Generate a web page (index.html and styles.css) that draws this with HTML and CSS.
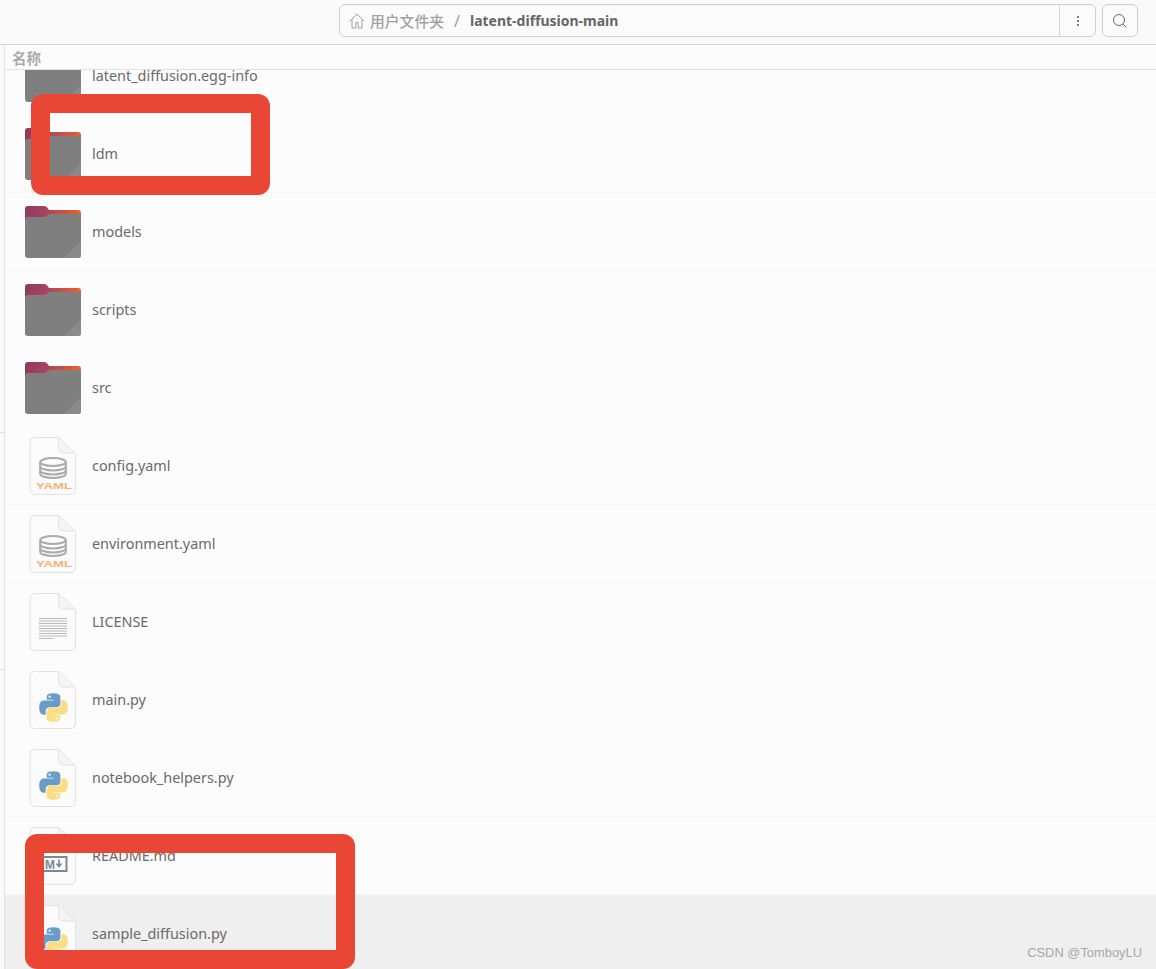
FILE: index.html
```html
<!DOCTYPE html>
<html lang="zh-CN">
<head>
    <meta charset="UTF-8">
    <meta name="viewport" content="width=device-width, initial-scale=1.0">
    <title>latent-diffusion-main</title>
    <link rel="stylesheet" href="styles.css">
</head>
<body>
    <svg class="defs" width="0" height="0">
        <defs>
            <linearGradient id="folderBack" x1="0" y1="0" x2="1" y2="0.2">
                <stop offset="0" stop-color="#8e3766"/>
                <stop offset="0.45" stop-color="#a9485a"/>
                <stop offset="1" stop-color="#e8622c"/>
            </linearGradient>
            <symbol id="folder" viewBox="0 0 64 64">
                <path d="M4 9a3 3 0 0 1 3-3h16c2 0 3 1 4 2.500l1 1.500h29a3 3 0 0 1 3 3v20H4z" fill="url(#folderBack)"/>
                <path d="M4 20a3 3 0 0 1 3-3h15c2 0 3-.5 4-1.500l.5-.5c.8-.700 1.500-1 3-1H57a3 3 0 0 1 3 3v38a3 3 0 0 1-3 3H7a3 3 0 0 1-3-3z" fill="#7f7f7f"/>
                <path d="M60 41v14a3 3 0 0 1-3 3H43z" fill="#8a8a8a"/>
            </symbol>
            <symbol id="page" viewBox="0 0 64 64">
                <path d="M13.500 3.500h23.500c1 0 1.500.4 2.300 1.200l14.500 14c.5.600.7 1 .7 2V56a4.500 4.500 0 0 1-4.500 4.500H13.500A4.500 4.500 0 0 1 9 56V8a4.500 4.500 0 0 1 4.500-4.500z" fill="#fbfbfb" stroke="#e2e2e2"/>
                <path d="M37.500 4v10a5 5 0 0 0 5 5h11.500" fill="#f4f4f4" stroke="#e2e2e2"/>
            </symbol>
            <symbol id="python" viewBox="0 0 24 24">
                <path d="M12 .2C6 .2 6.400 2.800 6.400 2.800v2.700h5.700v.8H4.100S.2 5.900.2 12s3.300 5.900 3.300 5.900h2v-2.800s-.1-3.400 3.300-3.400h5.700s3.200.1 3.200-3.100V3.400S18.200.2 12 .2z" fill="#6a9cc7"/>
                <circle cx="8.800" cy="3" r="1" fill="#e8eef4"/>
                <path d="M12 23.800c6 0 5.600-2.600 5.600-2.600v-2.700h-5.700v-.8h8s3.900.4 3.900-5.700-3.300-5.900-3.300-5.900h-2v2.800s.1 3.400-3.300 3.400H9.500s-3.200-.1-3.200 3.100v5.200s-.5 3.200 5.700 3.200z" fill="#fbdd83"/>
                <circle cx="15.200" cy="21" r="1" fill="#fdf6dc"/>
            </symbol>
            <symbol id="database" viewBox="0 0 28 22">
                <g fill="none" stroke="#ababab" stroke-width="2">
                    <ellipse cx="14" cy="5" rx="12.800" ry="4"/>
                    <path d="M1.200 5v12c0 2.200 5.700 4 12.800 4s12.800-1.800 12.800-4V5"/>
                    <path d="M1.200 9.500c0 2.200 5.700 4 12.800 4s12.800-1.800 12.800-4"/>
                    <path d="M1.200 13.500c0 2.200 5.700 4 12.800 4s12.800-1.800 12.800-4"/>
                </g>
            </symbol>
        </defs>
    </svg>

    <header class="toolbar">
        <div class="pathbar">
            <div class="crumbs">
                <svg class="home-icon" width="16" height="16" viewBox="0 0 16 16">
                    <path d="M.8 8.300 8 1l7.200 7.300M3 6.300v8.700h3.800V9.500h2.400V15H13V6.300" fill="none" stroke="#a0a0a0"/>
                </svg>
                <span class="crumb">用户文件夹</span>
                <span class="crumb-sep">/</span>
                <span class="crumb-current">latent-diffusion-main</span>
            </div>
            <button class="menu-btn">
                <svg width="4" height="12" viewBox="0 0 4 12"><g fill="#555"><circle cx="2" cy="2" r="1"/><circle cx="2" cy="6" r="1"/><circle cx="2" cy="10" r="1"/></g></svg>
            </button>
        </div>
        <button class="search-btn">
            <svg width="16" height="16" viewBox="0 0 16 16">
                <circle cx="7" cy="7" r="5.500" fill="none" stroke="#666"/>
                <path d="m11 11 3.500 3.500" stroke="#666"/>
            </svg>
        </button>
    </header>

    <div class="main">
        <aside class="sidebar">
            <div class="side-section side-places"></div>
            <div class="side-section side-devices"></div>
        </aside>
        <section class="content">
            <div class="col-header">名称</div>
            <div class="list">
                <div class="rows">
                    <div class="row">
                        <svg class="icon"><use href="#folder"/></svg>
                        <span class="name">latent_diffusion.egg-info</span>
                    </div>
                    <div class="row">
                        <svg class="icon"><use href="#folder"/></svg>
                        <span class="name">ldm</span>
                    </div>
                    <div class="row">
                        <svg class="icon"><use href="#folder"/></svg>
                        <span class="name">models</span>
                    </div>
                    <div class="row">
                        <svg class="icon"><use href="#folder"/></svg>
                        <span class="name">scripts</span>
                    </div>
                    <div class="row">
                        <svg class="icon"><use href="#folder"/></svg>
                        <span class="name">src</span>
                    </div>
                    <div class="row">
                        <svg class="icon" viewBox="0 0 64 64">
                            <use href="#page" width="64" height="64"/>
                            <use href="#database" x="18" y="23" width="28" height="22"/>
                            <text class="yaml-label" x="15" y="55" textLength="36" lengthAdjust="spacingAndGlyphs">YAML</text>
                        </svg>
                        <span class="name">config.yaml</span>
                    </div>
                    <div class="row">
                        <svg class="icon" viewBox="0 0 64 64">
                            <use href="#page" width="64" height="64"/>
                            <use href="#database" x="18" y="23" width="28" height="22"/>
                            <text class="yaml-label" x="15" y="55" textLength="36" lengthAdjust="spacingAndGlyphs">YAML</text>
                        </svg>
                        <span class="name">environment.yaml</span>
                    </div>
                    <div class="row">
                        <svg class="icon" viewBox="0 0 64 64">
                            <use href="#page" width="64" height="64"/>
                            <path d="M18 28.500h28M18 31h28M18 33.500h28M18 36h28M18 38.500h28M18 41h28M18 43.500h28M18 46h28M18 48.500h14" stroke="#b9b9b9" stroke-width="1"/>
                        </svg>
                        <span class="name">LICENSE</span>
                    </div>
                    <div class="row">
                        <svg class="icon" viewBox="0 0 64 64">
                            <use href="#page" width="64" height="64"/>
                            <use href="#python" x="18" y="25" width="29" height="29"/>
                        </svg>
                        <span class="name">main.py</span>
                    </div>
                    <div class="row">
                        <svg class="icon" viewBox="0 0 64 64">
                            <use href="#page" width="64" height="64"/>
                            <use href="#python" x="18" y="25" width="29" height="29"/>
                        </svg>
                        <span class="name">notebook_helpers.py</span>
                    </div>
                    <div class="row">
                        <svg class="icon" viewBox="0 0 64 64">
                            <use href="#page" width="64" height="64"/>
                            <rect x="14" y="33" width="31.500" height="14" fill="none" stroke="#7b8a92" stroke-width="2"/>
                            <text class="md-label" x="24" y="44.500">M</text>
                            <path d="M38 35.500v7M35.500 39.500l2.500 3 2.500-3" fill="none" stroke="#7b8a92" stroke-width="1.600"/>
                        </svg>
                        <span class="name">README.md</span>
                    </div>
                    <div class="row selected">
                        <svg class="icon" viewBox="0 0 64 64">
                            <use href="#page" width="64" height="64"/>
                            <use href="#python" x="18" y="25" width="29" height="29"/>
                        </svg>
                        <span class="name">sample_diffusion.py</span>
                    </div>
                </div>
            </div>
        </section>
    </div>

    <div class="mark mark-top"></div>
    <div class="mark mark-bottom"></div>
    <div class="watermark">CSDN @TomboyLU</div>
</body>
</html>
```

FILE: styles.css
```css
* {
    box-sizing: border-box;
}

html, body {
    height: 100%;
}

body {
    margin: 0;
    position: relative;
    display: flex;
    flex-direction: column;
    overflow: hidden;
    background-color: #fcfcfc;
    color: #666;
    font-family: "Noto Sans", "Noto Sans CJK SC", sans-serif;
    font-size: 14px;
}

.defs {
    position: absolute;
}

/* top bar */
.toolbar {
    flex: none;
    height: 45px;
    padding: 4px 18px 0 339px;
    display: flex;
    align-items: flex-start;
    gap: 6px;
    background-color: #fafafa;
    border-bottom: 1px solid #d4d4d4;
}

.pathbar {
    flex: 1;
    height: 33px;
    display: flex;
    background-color: #fbfbfb;
    border: 1px solid #cfcfcf;
    border-radius: 6px;
}

.crumbs {
    flex: 1;
    display: flex;
    align-items: center;
    padding-left: 9px;
    border-right: 1px solid #d6d6d6;
}

.home-icon {
    margin-right: 5px;
}

.crumb {
    color: #a2a2a2;
    font-size: 14.800px;
    font-weight: 500;
}

.crumb-sep {
    margin: 0 10px 0 10px;
    color: #a2a2a2;
    font-size: 16px;
}

.crumb-current {
    color: #666;
    font-weight: 700;
    font-size: 14px;
}

.menu-btn {
    width: 35px;
    padding: 0;
    display: flex;
    align-items: center;
    justify-content: center;
    background: none;
    border: none;
}

.search-btn {
    width: 36px;
    height: 33px;
    padding: 0;
    display: flex;
    align-items: center;
    justify-content: center;
    background-color: #fbfbfb;
    border: 1px solid #cfcfcf;
    border-radius: 6px;
}

/* left edge of the window and the file list */
.main {
    flex: 1;
    min-height: 0;
    display: flex;
}

.sidebar {
    flex: none;
    width: 5px;
    background-color: #fafafa;
    border-right: 1px solid #e2e2e2;
}

.side-section {
    border-bottom: 1px solid #dedede;
}

.side-places {
    height: 388px;
}

.side-devices {
    height: 237px;
}

.content {
    flex: 1;
    min-width: 0;
    display: flex;
    flex-direction: column;
}

.col-header {
    flex: none;
    height: 25px;
    padding-left: 7px;
    display: flex;
    align-items: center;
    color: #aaa;
    font-weight: 700;
    font-size: 14.500px;
    background-color: #fcfcfc;
    border-bottom: 1px solid #e2e2e2;
}

.list {
    flex: 1;
    min-height: 0;
    overflow: hidden;
}

/* list is scrolled, the first row is cut off by the header */
.rows {
    margin-top: -33px;
}

.row {
    height: 78px;
    padding-left: 16px;
    display: flex;
    align-items: center;
    border-bottom: 1px solid #f9f9f9;
}

.row.selected {
    background-color: #efefef;
}

.icon {
    flex: none;
    width: 64px;
    height: 64px;
    margin-right: 7px;
}

.name {
    font-size: 14.400px;
    color: #6a6a6a;
}

.yaml-label {
    font-family: "Liberation Sans", sans-serif;
    font-weight: 700;
    font-size: 9.500px;
    fill: #f5b36e;
}

.md-label {
    font-family: "Liberation Sans", sans-serif;
    font-weight: 700;
    font-size: 12px;
    fill: #7b8a92;
}

/* red boxes drawn on the screenshot */
.mark {
    position: absolute;
    border: 19px solid #ea4636;
    border-radius: 12px;
}

.mark-top {
    left: 31px;
    top: 94px;
    width: 239px;
    height: 101px;
}

.mark-bottom {
    left: 25px;
    top: 834px;
    width: 330px;
    height: 135px;
}

.watermark {
    position: absolute;
    right: 14px;
    bottom: 9px;
    color: #a8a8a8;
    font-family: "Liberation Sans", sans-serif;
    font-size: 12.900px;
}
```
